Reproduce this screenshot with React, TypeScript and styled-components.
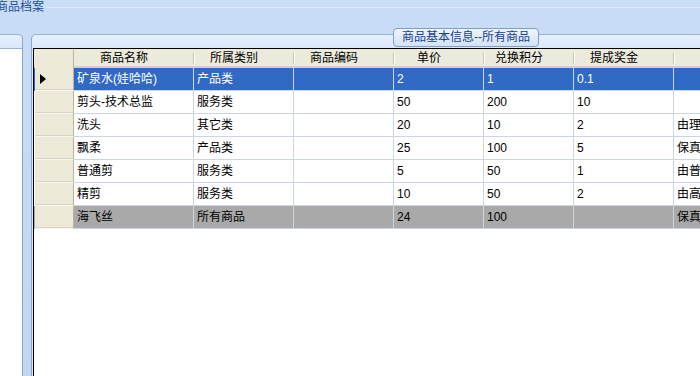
import styled, { createGlobalStyle } from "styled-components";

const GlobalStyle = createGlobalStyle`
  html, body {
    margin: 0;
    padding: 0;
    background: #c4d9f4;
    font-family: "Liberation Sans", "Noto Sans CJK SC", sans-serif;
    font-size: 12px;
  }
`;

type RowKind = "selected" | "normal" | "dim";

interface Product {
  name: string;
  category: string;
  code: string;
  price: string;
  points: string;
  bonus: string;
  note: string;
  kind: RowKind;
}

const COLUMNS = [
  { title: "商品名称", width: 120 },
  { title: "所属类别", width: 100 },
  { title: "商品编码", width: 100 },
  { title: "单价", width: 90 },
  { title: "兑换积分", width: 90 },
  { title: "提成奖金", width: 100 },
  { title: "备注", width: 160 },
];

const products: Product[] = [
  { name: "矿泉水(娃哈哈)", category: "产品类", code: "", price: "2", points: "1", bonus: "0.1", note: "", kind: "selected" },
  { name: "剪头-技术总监", category: "服务类", code: "", price: "50", points: "200", bonus: "10", note: "", kind: "normal" },
  { name: "洗头", category: "其它类", code: "", price: "20", points: "10", bonus: "2", note: "由理发师完成", kind: "normal" },
  { name: "飘柔", category: "产品类", code: "", price: "25", points: "100", bonus: "5", note: "保真洗发水", kind: "normal" },
  { name: "普通剪", category: "服务类", code: "", price: "5", points: "50", bonus: "1", note: "由普通理发师完成", kind: "normal" },
  { name: "精剪", category: "服务类", code: "", price: "10", points: "50", bonus: "2", note: "由高级理发师完成", kind: "normal" },
  { name: "海飞丝", category: "所有商品", code: "", price: "24", points: "100", bonus: "", note: "保真洗发水", kind: "dim" },
];

export default function App() {
  return (
    <>
      <GlobalStyle />
      <Page>
        <Caption>
          <CaptionText>商品档案</CaptionText>
          <CaptionLine />
        </Caption>
        <Body>
          <SidePanel>
            <SideContent />
          </SidePanel>
          <MainPanel>
            <Legend>商品基本信息--所有商品</Legend>
            <Grid>
              <HeaderRow>
                <RowHeaderCell $head />
                {COLUMNS.map((c) => (
                  <HeaderCell key={c.title} $width={c.width}>
                    {c.title === "备注" ? "" : c.title}
                  </HeaderCell>
                ))}
              </HeaderRow>
              {products.map((p, i) => {
                const values = [p.name, p.category, p.code, p.price, p.points, p.bonus, p.note];
                return (
                  <Row key={i} $kind={p.kind}>
                    <RowHeaderCell>
                      {i === 0 && (
                        <svg width="6" height="10" viewBox="0 0 6 10">
                          <path d="M0 0 L6 5 L0 10 Z" fill="#000" />
                        </svg>
                      )}
                    </RowHeaderCell>
                    {values.map((v, j) => (
                      <Cell key={j} $width={COLUMNS[j].width}>
                        {v}
                      </Cell>
                    ))}
                  </Row>
                );
              })}
            </Grid>
          </MainPanel>
        </Body>
      </Page>
    </>
  );
}

const Page = styled.div`
  width: 700px;
  height: 376px;
  overflow: hidden;
  display: flex;
  flex-direction: column;
  background: linear-gradient(#c9ddf6, #c1d6f2);
`;

const Caption = styled.div`
  height: 34px;
  display: flex;
  align-items: flex-start;
  flex-shrink: 0;
`;

const CaptionText = styled.div`
  margin-left: -4px;
  margin-top: 0px;
  line-height: 14px;
  color: #1d4f9c;
  white-space: nowrap;
`;

const CaptionLine = styled.div`
  flex: 1;
  margin-top: 7px;
  margin-left: 2px;
  border-top: 1px solid #dfe9f6;
`;

const Body = styled.div`
  flex: 1;
  display: flex;
  gap: 8px;
  min-height: 0;
`;

const SidePanel = styled.div`
  width: 22px;
  flex-shrink: 0;
  display: flex;
  flex-direction: column;
  padding-top: 13px;
  background: linear-gradient(#e6effc, #dae7fa 14px, #dae7fa);
  border-top: 1px solid #98b3d8;
  border-right: 1px solid #8aa6cc;
  border-top-right-radius: 5px;
`;

const SideContent = styled.div`
  flex: 1;
  background: #fff;
  border-top: 1px solid #9fb4d2;
`;

const MainPanel = styled.div`
  position: relative;
  flex: 1;
  display: flex;
  flex-direction: column;
  padding-top: 13px;
  padding-left: 1px;
  background: linear-gradient(#e6effc, #dae7fa 14px, #dae7fa);
  border-top: 1px solid #98b3d8;
  border-left: 1px solid #8aa6cc;
  border-top-left-radius: 5px;
  min-width: 0;
`;

const Legend = styled.div`
  position: absolute;
  left: 361px;
  top: -7px;
  height: 17px;
  padding: 0 8px;
  line-height: 17px;
  color: #15428b;
  white-space: nowrap;
  border: 1px solid #7f9dc9;
  border-radius: 4px;
  background: linear-gradient(#eef4fd, #d3e2f7);
`;

const Grid = styled.div`
  flex: 1;
  background: #fff;
  border-top: 1px solid #000;
  border-left: 1px solid #000;
  overflow: hidden;
`;

const HeaderRow = styled.div`
  display: flex;
  height: 19px;
  background: #ebeadb;
  box-shadow: inset 0 -2px 0 #d6d2c2;
`;

const HeaderCell = styled.div<{ $width: number }>`
  position: relative;
  flex: 0 0 ${(p) => p.$width}px;
  box-sizing: border-box;
  padding-right: 20px;
  text-align: center;
  line-height: 19px;
  color: #000;
  white-space: nowrap;

  &::after {
    content: "";
    position: absolute;
    right: 0;
    top: 4px;
    bottom: 4px;
    width: 1px;
    background: #c7c3b2;
    box-shadow: 1px 0 0 #fff;
  }
`;

const Row = styled.div<{ $kind: RowKind }>`
  display: flex;
  height: 23px;
  background: ${(p) =>
    p.$kind === "selected" ? "#316ac5" : p.$kind === "dim" ? "#a9a9a9" : "#fff"};
  color: ${(p) => (p.$kind === "selected" ? "#fff" : "#000")};
`;

const RowHeaderCell = styled.div<{ $head?: boolean }>`
  flex: 0 0 40px;
  box-sizing: border-box;
  margin-left: 1px;
  display: flex;
  align-items: center;
  padding-left: 5px;
  background: #ece9d8;
  border-right: 1px solid #b8b4a2;
  border-bottom: ${(p) => (p.$head ? "none" : "1px solid #f7f6ef")};
  box-shadow: ${(p) => (p.$head ? "none" : "inset 0 -1px 0 #d8d4c3")};
  flex-basis: 39px;
`;

const Cell = styled.div<{ $width: number }>`
  flex: 0 0 ${(p) => p.$width}px;
  box-sizing: border-box;
  padding-left: 3px;
  line-height: 22px;
  border-right: 1px solid #cdd4e2;
  border-bottom: 1px solid #cdd4e2;
  white-space: nowrap;
  overflow: hidden;
`;
